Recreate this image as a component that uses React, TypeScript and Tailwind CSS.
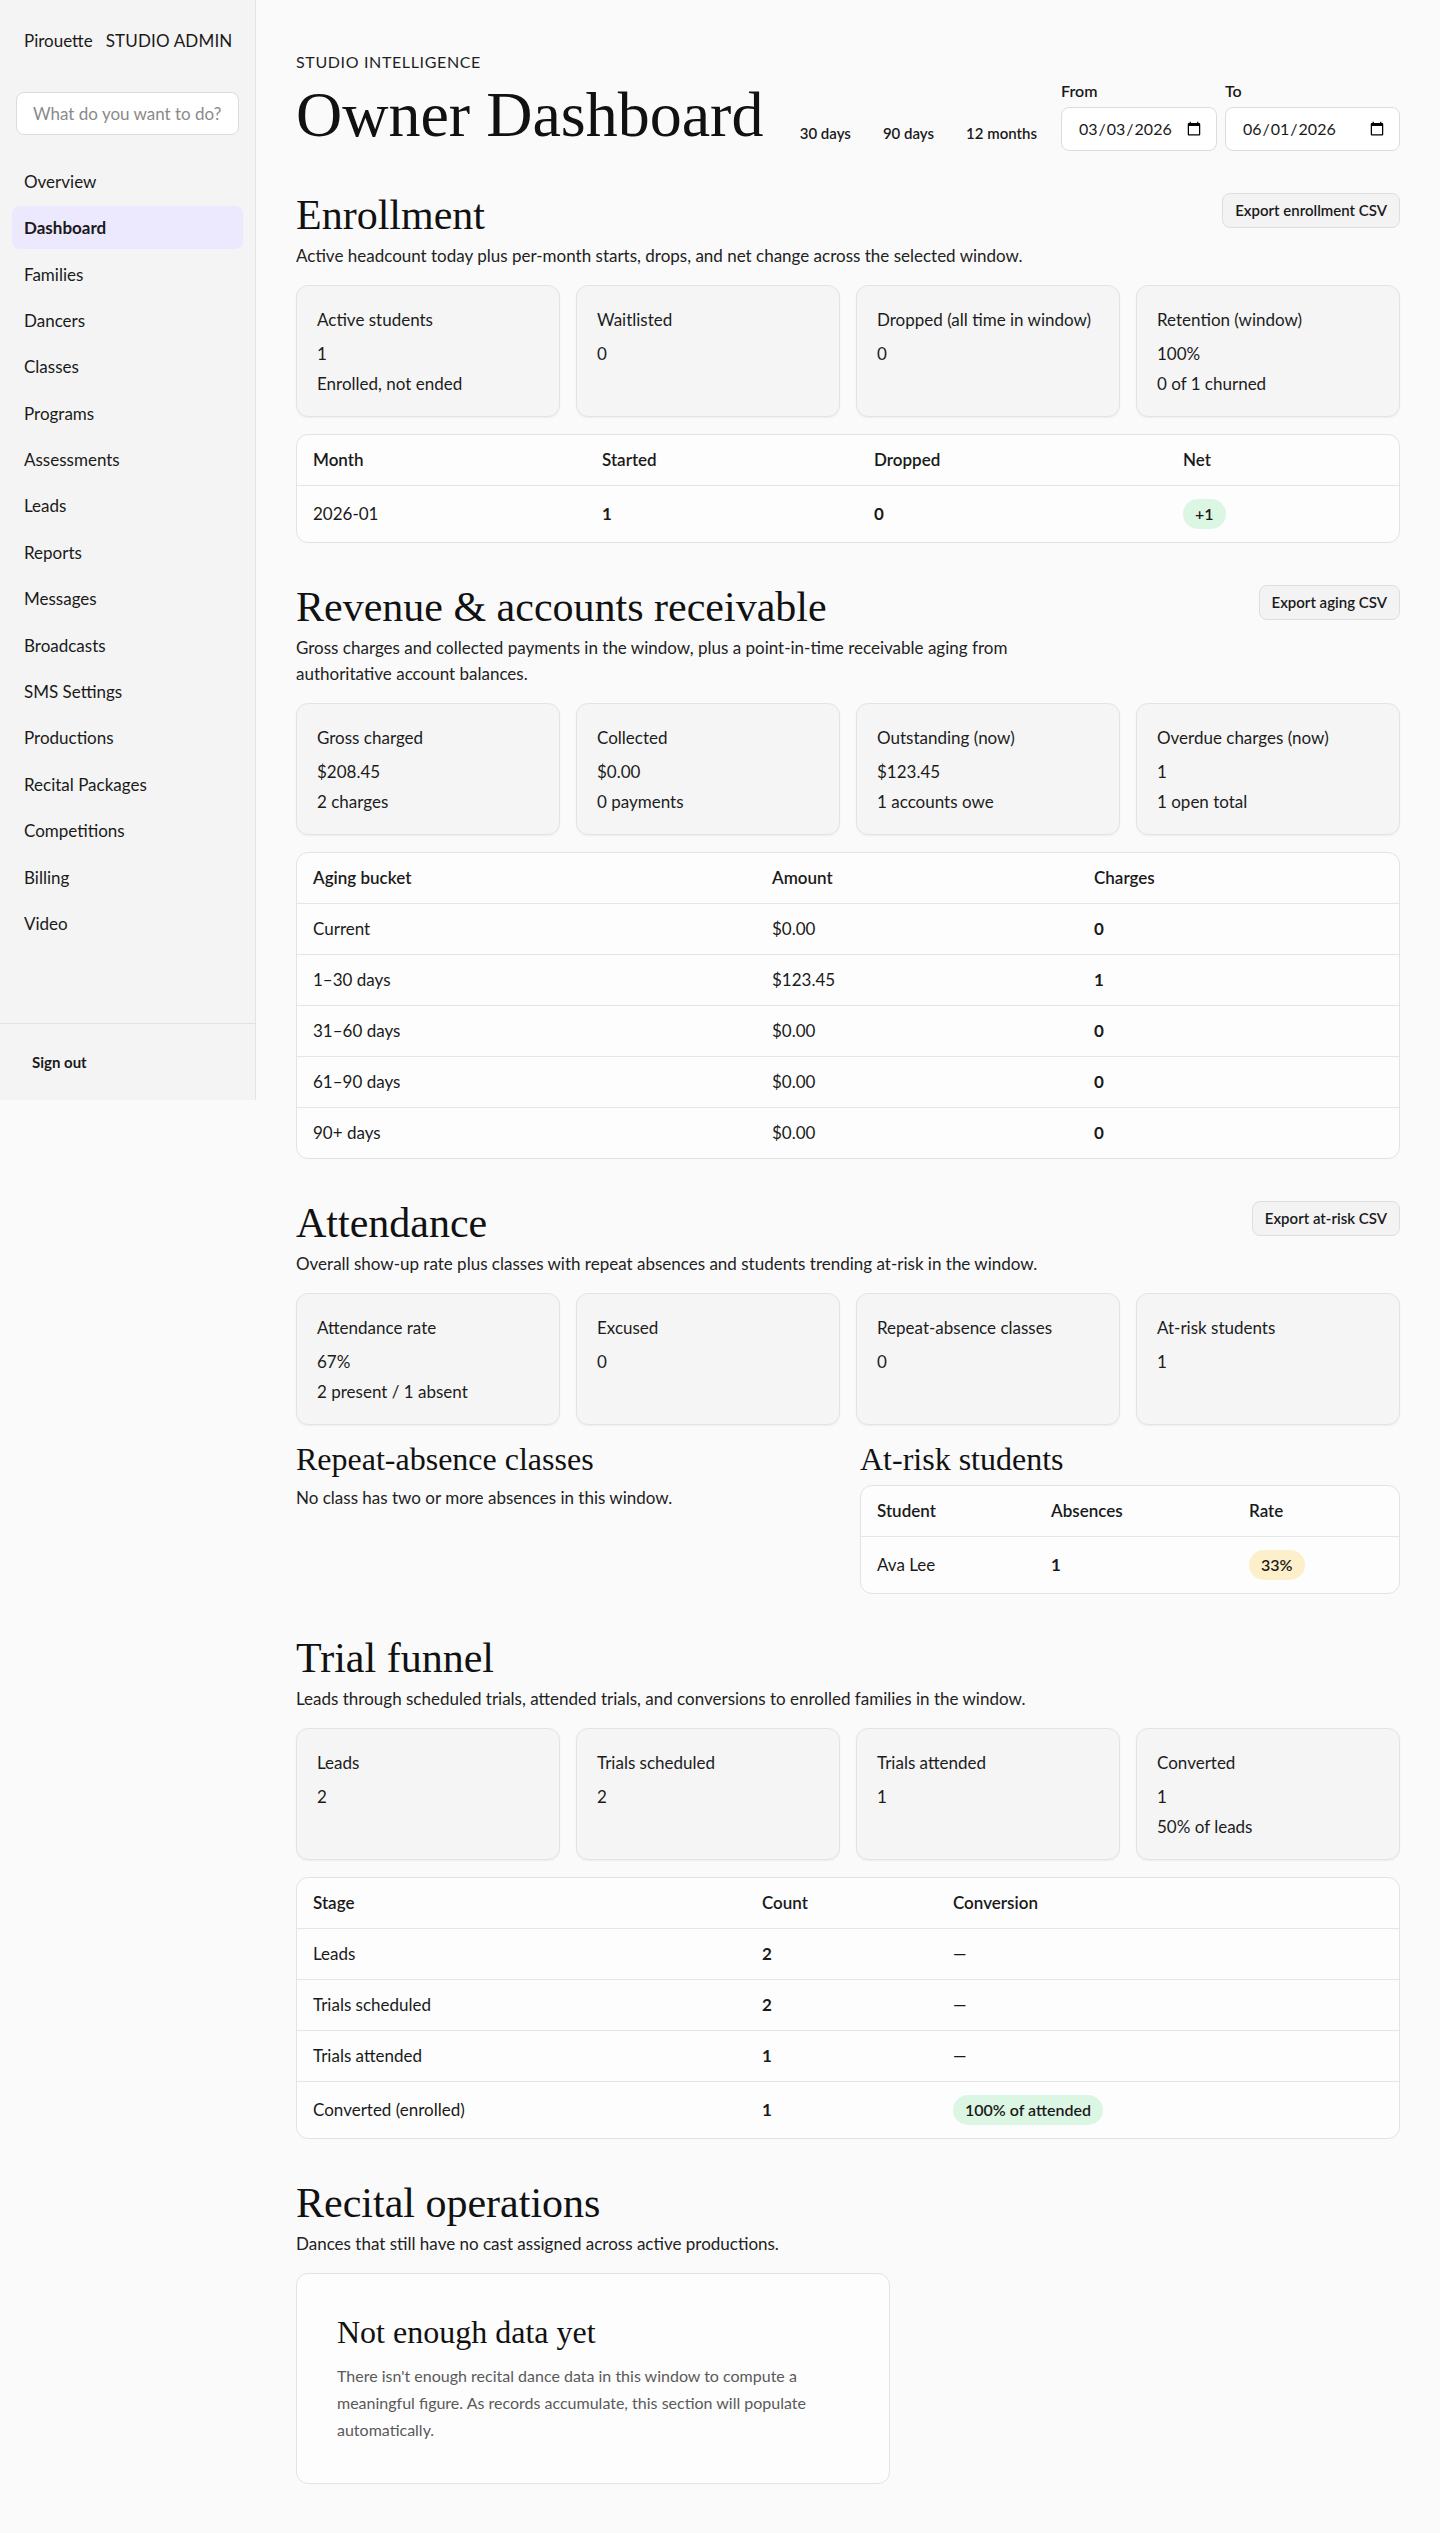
import React from "react";

const navItems = [
  "Overview",
  "Dashboard",
  "Families",
  "Dancers",
  "Classes",
  "Programs",
  "Assessments",
  "Leads",
  "Reports",
  "Messages",
  "Broadcasts",
  "SMS Settings",
  "Productions",
  "Recital Packages",
  "Competitions",
  "Billing",
  "Video",
];

function Sidebar() {
  return (
    <aside className="w-64 shrink-0 h-[1100px] bg-[#f4f4f4] border-r border-[#e3e3e3] flex flex-col text-[#1a1a1a]">
      <div className="pl-6 pr-2 pt-[29px] flex items-center gap-[13px] whitespace-nowrap text-[17px] leading-6">
        <span>Pirouette</span>
        <span className="tracking-[0.01em]">STUDIO ADMIN</span>
      </div>
      <div className="px-4 mt-[39px]">
        <input
          placeholder="What do you want to do?"
          className="w-full h-[43px] rounded-lg border border-[#dcdcdc] bg-white px-4 text-[17px] placeholder:text-[#8a8a8a] outline-none"
        />
      </div>
      <nav className="flex-1 px-3 mt-[25px] flex flex-col gap-[3.4px]">
        {navItems.map((n) =>
          n === "Dashboard" ? (
            <div key={n} className="h-[43px] px-3 flex items-center rounded-lg text-[17px] bg-[#ece8fd] font-bold">
              {n}
            </div>
          ) : (
            <div key={n} className="h-[43px] px-3 flex items-center rounded-lg text-[17px]">
              {n}
            </div>
          )
        )}
      </nav>
      <div className="border-t border-[#e2e2e2] p-3">
        <button className="px-5 py-4 text-[15px] leading-5 font-bold">Sign out</button>
      </div>
    </aside>
  );
}

function DateField({ label, value, wide }: { label: string; value: string; wide?: boolean }) {
  return (
    <div className="flex flex-col gap-1.5">
      <label className="text-base leading-5 font-semibold">{label}</label>
      <input
        type="date"
        defaultValue={value}
        className={
          wide
            ? "w-[175px] h-[44px] rounded-lg border border-[#dcdcdc] bg-white pl-4 pr-3 text-base"
            : "w-[156px] h-[44px] rounded-lg border border-[#dcdcdc] bg-white pl-4 pr-3 text-base"
        }
      />
    </div>
  );
}

function Section({
  title,
  desc,
  action,
  children,
}: {
  title: string;
  desc: string;
  action?: string;
  children?: React.ReactNode;
}) {
  return (
    <section className="mt-10">
      <div className="flex items-start justify-between gap-4">
        <h2 className="font-['Liberation_Serif',serif] text-[42px] leading-[48px] text-[#111]">{title}</h2>
        {action && (
          <button className="mt-0.5 h-[35px] px-3 rounded-lg border border-[#dedede] bg-[#f3f3f3] text-[15px] font-semibold text-[#1a1a1a]">
            {action}
          </button>
        )}
      </div>
      <p className="mt-1 max-w-3xl text-[17px] leading-[26px] text-[#222]">{desc}</p>
      {children}
    </section>
  );
}

type CardT = { label: string; value: string; sub?: string };

function Cards({ items }: { items: CardT[] }) {
  return (
    <div className="mt-4 grid grid-cols-4 gap-4">
      {items.map((c) => (
        <div
          key={c.label}
          className="rounded-xl border border-[#e3e3e3] bg-[#f5f5f5] px-5 pt-[22px] pb-5 shadow-[0_1px_2px_rgba(0,0,0,0.05)] text-[#1c1c1c]"
        >
          <div className="leading-6">{c.label}</div>
          <div className="mt-2.5 leading-6">{c.value}</div>
          {c.sub && <div className="mt-1.5 leading-6">{c.sub}</div>}
        </div>
      ))}
    </div>
  );
}

function Badge({ children, tone }: { children: React.ReactNode; tone: "green" | "amber" }) {
  return (
    <span
      className={
        tone === "green"
          ? "inline-flex items-center align-middle h-[30px] px-3 rounded-full bg-[#dcf6e4] text-base font-semibold text-[#1b1b1b]"
          : "inline-flex items-center align-middle h-[30px] px-3 rounded-full bg-[#fdefc9] text-base font-semibold text-[#1b1b1b]"
      }
    >
      {children}
    </span>
  );
}

type Cell = { v: React.ReactNode; bold?: boolean };

function DataTable({
  heads,
  rows,
  className,
}: {
  heads: { label: string; w: string }[];
  rows: Cell[][];
  className?: string;
}) {
  return (
    <div className={"rounded-xl border border-[#e3e3e3] bg-[#fdfdfd] overflow-hidden " + (className ?? "")}>
      <table className="w-full table-fixed border-collapse text-[#1a1a1a]">
        <thead>
          <tr>
            {heads.map((h) => (
              <th key={h.label} className={h.w + " px-4 py-[13px] text-left font-semibold leading-6 border-b border-[#e6e6e6]"}>
                {h.label}
              </th>
            ))}
          </tr>
        </thead>
        <tbody>
          {rows.map((r, i) => (
            <tr key={i} className={i < rows.length - 1 ? "border-b border-[#e6e6e6]" : ""}>
              {r.map((c, j) => (
                <td key={j} className={c.bold ? "px-4 py-[13px] leading-6 font-bold" : "px-4 py-[13px] leading-6"}>
                  {c.v}
                </td>
              ))}
            </tr>
          ))}
        </tbody>
      </table>
    </div>
  );
}

export default function App() {
  return (
    <div className="flex items-start min-h-screen bg-[#fafafa] font-[Lato,sans-serif] text-[17px] text-[#1a1a1a]">
      <Sidebar />
      <main className="flex-1 min-w-0 px-10 pt-[50px] pb-12">
        <header className="flex items-end justify-between">
          <div>
            <div className="text-base leading-6 uppercase tracking-[0.04em] text-[#1f1f1f]">Studio Intelligence</div>
            <h1 className="mt-[5px] font-['Liberation_Serif',serif] text-[64px] leading-[72px] text-[#111]">
              Owner Dashboard
            </h1>
          </div>
          <div className="flex items-end gap-2">
            <div className="flex">
              <button className="h-9 px-4 text-[15px] font-semibold">30 days</button>
              <button className="h-9 px-4 text-[15px] font-semibold">90 days</button>
              <button className="h-9 px-4 text-[15px] font-semibold">12 months</button>
            </div>
            <DateField label="From" value="2026-03-03" />
            <DateField label="To" value="2026-06-01" wide />
          </div>
        </header>

        <Section
          title="Enrollment"
          desc="Active headcount today plus per-month starts, drops, and net change across the selected window."
          action="Export enrollment CSV"
        >
          <Cards
            items={[
              { label: "Active students", value: "1", sub: "Enrolled, not ended" },
              { label: "Waitlisted", value: "0" },
              { label: "Dropped (all time in window)", value: "0" },
              { label: "Retention (window)", value: "100%", sub: "0 of 1 churned" },
            ]}
          />
          <DataTable
            className="mt-[17px]"
            heads={[
              { label: "Month", w: "w-[289px]" },
              { label: "Started", w: "w-[272px]" },
              { label: "Dropped", w: "w-[309px]" },
              { label: "Net", w: "w-[232px]" },
            ]}
            rows={[
              [
                { v: "2026-01" },
                { v: "1", bold: true },
                { v: "0", bold: true },
                { v: <Badge tone="green">+1</Badge> },
              ],
            ]}
          />
        </Section>

        <Section
          title="Revenue & accounts receivable"
          desc="Gross charges and collected payments in the window, plus a point-in-time receivable aging from authoritative account balances."
          action="Export aging CSV"
        >
          <Cards
            items={[
              { label: "Gross charged", value: "$208.45", sub: "2 charges" },
              { label: "Collected", value: "$0.00", sub: "0 payments" },
              { label: "Outstanding (now)", value: "$123.45", sub: "1 accounts owe" },
              { label: "Overdue charges (now)", value: "1", sub: "1 open total" },
            ]}
          />
          <DataTable
            className="mt-[17px]"
            heads={[
              { label: "Aging bucket", w: "w-[459px]" },
              { label: "Amount", w: "w-[322px]" },
              { label: "Charges", w: "w-[321px]" },
            ]}
            rows={[
              [{ v: "Current" }, { v: "$0.00" }, { v: "0", bold: true }],
              [{ v: "1–30 days" }, { v: "$123.45" }, { v: "1", bold: true }],
              [{ v: "31–60 days" }, { v: "$0.00" }, { v: "0", bold: true }],
              [{ v: "61–90 days" }, { v: "$0.00" }, { v: "0", bold: true }],
              [{ v: "90+ days" }, { v: "$0.00" }, { v: "0", bold: true }],
            ]}
          />
        </Section>

        <Section
          title="Attendance"
          desc="Overall show-up rate plus classes with repeat absences and students trending at-risk in the window."
          action="Export at-risk CSV"
        >
          <Cards
            items={[
              { label: "Attendance rate", value: "67%", sub: "2 present / 1 absent" },
              { label: "Excused", value: "0" },
              { label: "Repeat-absence classes", value: "0" },
              { label: "At-risk students", value: "1" },
            ]}
          />
          <div className="mt-4 grid grid-cols-2 gap-6">
            <div>
              <h3 className="font-['Liberation_Serif',serif] text-[32px] leading-9 text-[#111]">Repeat-absence classes</h3>
              <p className="mt-2 leading-[26px] text-[#222]">No class has two or more absences in this window.</p>
            </div>
            <div>
              <h3 className="font-['Liberation_Serif',serif] text-[32px] leading-9 text-[#111]">At-risk students</h3>
              <DataTable
                className="mt-2"
                heads={[
                  { label: "Student", w: "w-[174px]" },
                  { label: "Absences", w: "w-[198px]" },
                  { label: "Rate", w: "w-[166px]" },
                ]}
                rows={[[{ v: "Ava Lee" }, { v: "1", bold: true }, { v: <Badge tone="amber">33%</Badge> }]]}
              />
            </div>
          </div>
        </Section>

        <Section
          title="Trial funnel"
          desc="Leads through scheduled trials, attended trials, and conversions to enrolled families in the window."
        >
          <Cards
            items={[
              { label: "Leads", value: "2" },
              { label: "Trials scheduled", value: "2" },
              { label: "Trials attended", value: "1" },
              { label: "Converted", value: "1", sub: "50% of leads" },
            ]}
          />
          <DataTable
            className="mt-[17px]"
            heads={[
              { label: "Stage", w: "w-[449px]" },
              { label: "Count", w: "w-[191px]" },
              { label: "Conversion", w: "w-[462px]" },
            ]}
            rows={[
              [{ v: "Leads" }, { v: "2", bold: true }, { v: "—" }],
              [{ v: "Trials scheduled" }, { v: "2", bold: true }, { v: "—" }],
              [{ v: "Trials attended" }, { v: "1", bold: true }, { v: "—" }],
              [
                { v: "Converted (enrolled)" },
                { v: "1", bold: true },
                { v: <Badge tone="green">100% of attended</Badge> },
              ],
            ]}
          />
        </Section>

        <Section title="Recital operations" desc="Dances that still have no cast assigned across active productions.">
          <div className="mt-4 w-[594px] rounded-xl border border-[#e3e3e3] bg-[#fdfdfd] p-10">
            <h3 className="font-['Liberation_Serif',serif] text-[32px] leading-9 text-[#111]">Not enough data yet</h3>
            <p className="mt-3 text-base leading-[27px] text-[#5a5a5a]">
              There isn't enough recital dance data in this window to compute a meaningful figure. As records
              accumulate, this section will populate automatically.
            </p>
          </div>
        </Section>
      </main>
    </div>
  );
}
